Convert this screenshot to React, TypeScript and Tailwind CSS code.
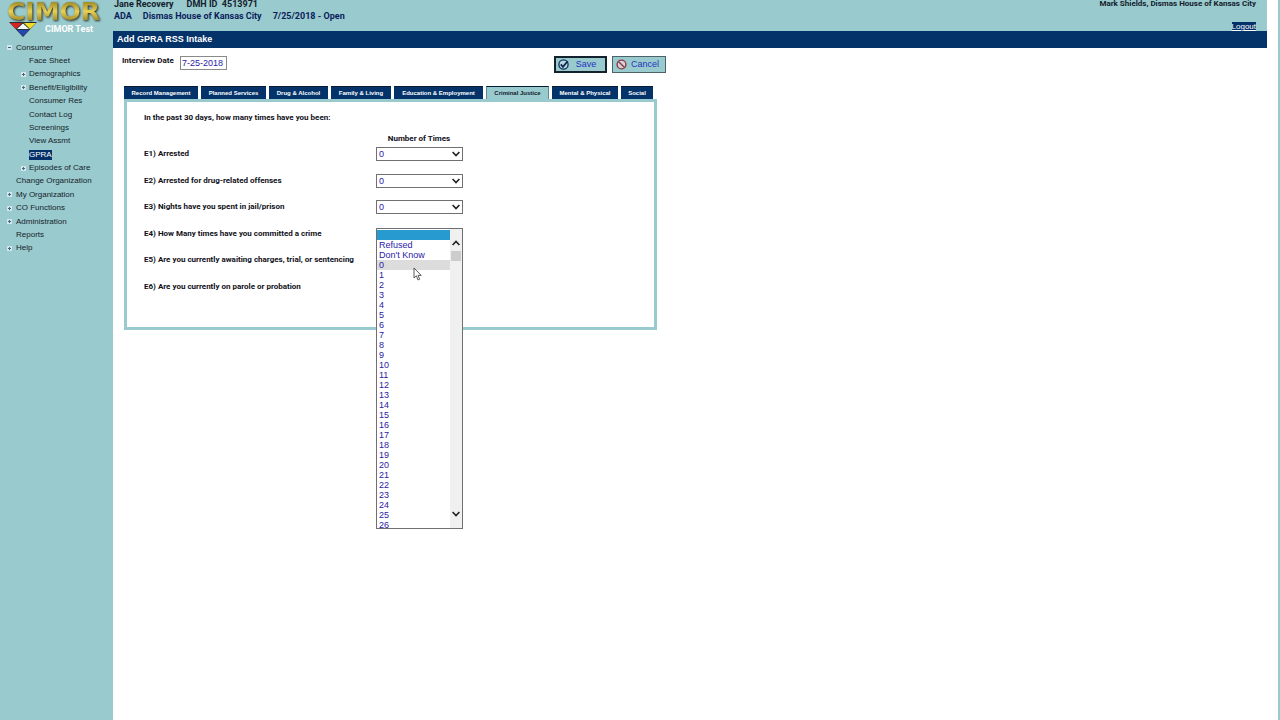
import { useState } from 'react';
import clsx from 'clsx';

interface NavItem {
  label: string;
  level: 0 | 1;
  toggle?: 'plus' | 'minus';
  active?: boolean;
}

const NAV: NavItem[] = [
  { label: 'Consumer', level: 0, toggle: 'minus' },
  { label: 'Face Sheet', level: 1 },
  { label: 'Demographics', level: 1, toggle: 'plus' },
  { label: 'Benefit/Eligibility', level: 1, toggle: 'plus' },
  { label: 'Consumer Res', level: 1 },
  { label: 'Contact Log', level: 1 },
  { label: 'Screenings', level: 1 },
  { label: 'View Assmt', level: 1 },
  { label: 'GPRA', level: 1, active: true },
  { label: 'Episodes of Care', level: 1, toggle: 'plus' },
  { label: 'Change Organization', level: 0 },
  { label: 'My Organization', level: 0, toggle: 'plus' },
  { label: 'CO Functions', level: 0, toggle: 'plus' },
  { label: 'Administration', level: 0, toggle: 'plus' },
  { label: 'Reports', level: 0 },
  { label: 'Help', level: 0, toggle: 'plus' },
];

const TABS = [
  { label: 'Record Management', width: 'w-[74px]' },
  { label: 'Planned Services', width: 'w-[65px]' },
  { label: 'Drug & Alcohol', width: 'w-[59px]' },
  { label: 'Family & Living', width: 'w-[60px]' },
  { label: 'Education & Employment', width: 'w-[89px]' },
  { label: 'Criminal Justice', width: 'w-[63px]' },
  { label: 'Mental & Physical', width: 'w-[66px]' },
  { label: 'Social', width: 'w-[32px]' },
];

const QUESTIONS = [
  { id: 'e1', label: 'E1) Arrested', value: '0' },
  { id: 'e2', label: 'E2) Arrested for drug-related offenses', value: '0' },
  { id: 'e3', label: 'E3) Nights have you spent in jail/prison', value: '0' },
  { id: 'e4', label: 'E4) How Many times have you committed a crime', open: true },
  { id: 'e5', label: 'E5) Are you currently awaiting charges, trial, or sentencing' },
  { id: 'e6', label: 'E6) Are you currently on parole or probation' },
];

const OPTIONS = ['', 'Refused', "Don't Know", ...Array.from({ length: 27 }, (_, i) => String(i))];

function Chevron({ up = false, className }: { up?: boolean; className?: string }) {
  return (
    <svg viewBox="0 0 8 6" className={clsx('h-[6px] w-2', className)} fill="none" stroke="#222" strokeWidth="1.6">
      <path d={up ? 'M0.6 5 4 1.4 7.4 5' : 'M0.6 1 4 4.6 7.4 1'} />
    </svg>
  );
}

function Toggle({ kind }: { kind: 'plus' | 'minus' }) {
  return (
    <svg viewBox="0 0 5 5" className="h-[5px] w-[5px]">
      <rect width="5" height="5" fill="#d3e6ec" />
      <path d={kind === 'plus' ? 'M1 2.5h3M2.5 1v3' : 'M1 2.5h3'} stroke="#4c6580" />
    </svg>
  );
}

function Logo() {
  return (
    <div className="h-[41px] pl-[7px]">
      <div className="h-[22px] font-['DejaVu_Sans'] text-[25px] leading-[24px] font-bold drop-shadow-[1px_1px_1px_#2b2a1c]">
        <span className="bg-linear-to-b from-[#7d6c10] via-[#e8d052] to-[#7a6510] bg-clip-text text-transparent">
          CIMOR
        </span>
      </div>
      <div className="flex items-center">
        <svg viewBox="0 0 28 15" className="ml-[2px] h-[15px] w-7">
          <path d="M0 0h28L14 15z" fill="#233" />
          <path d="M1 1h12L7 7z" fill="#d8231f" />
          <path d="M15 1h12l-6 6z" fill="#f0dc28" />
          <path d="M14 1.5 20 7H8z" fill="#f4f8f8" />
          <path d="M8 8h12l-6 6z" fill="#2447b5" />
        </svg>
        <span className="ml-[8px] font-[Roboto,sans-serif] text-[9px] leading-[15px] font-bold text-white">
          CIMOR Test
        </span>
      </div>
    </div>
  );
}

function Sidebar() {
  return (
    <aside className="w-[113px] shrink-0 bg-[#99cacd]">
      <Logo />
      <nav>
        <ul className="grid h-[214px] grid-rows-16">
          {NAV.map((item) => (
            <li key={item.label} className={clsx('flex items-center', item.level ? 'pl-[21px]' : 'pl-[7px]')}>
              <span className={item.level ? 'w-2' : 'w-[9px]'}>{item.toggle && <Toggle kind={item.toggle} />}</span>
              <a
                href="#"
                className={clsx(
                  'text-[8px] leading-[10px] whitespace-nowrap',
                  item.active ? 'bg-[#04306a] text-white' : 'text-[#16222c]',
                )}
              >
                {item.label}
              </a>
            </li>
          ))}
        </ul>
      </nav>
    </aside>
  );
}

function Header() {
  return (
    <header className="flex h-[31px] justify-between bg-[#99cacd] pr-[11px] pl-px font-bold">
      <div className="font-[Roboto,sans-serif] text-[9px] leading-[12px] text-[#0b1d5c]">
        <div className="-mt-[2px] flex gap-[13px] text-[#14202c]">
          <span>Jane Recovery</span>
          <span>DMH ID&nbsp; 4513971</span>
        </div>
        <div className="flex gap-[11px]">
          <span>ADA</span>
          <span>Dismas House of Kansas City</span>
          <span>7/25/2018 - Open</span>
        </div>
      </div>
      <div className="flex flex-col items-end justify-between text-[8px] leading-[9px]">
        <span className="-mt-px font-[Roboto,sans-serif] text-[#14202c]">Mark Shields, Dismas House of Kansas City</span>
        <a href="#" className="bg-[#04306a] text-[8px] font-normal text-white underline">
          Logout
        </a>
      </div>
    </header>
  );
}

function OpenList() {
  return (
    <div className="absolute top-px left-0 z-10 flex h-[301px] w-[87px] border border-[#707070] bg-white">
      <ul
        role="listbox"
        aria-label="Number of times committed a crime"
        className="flex-1 overflow-hidden pt-px"
      >
        {OPTIONS.map((option) => (
          <li
            key={option}
            role="option"
            aria-selected={option === ''}
            className={clsx(
              'h-[10px] pl-[2px] text-[9px] leading-[10px] text-[#2a20a8]',
              option === '' && 'bg-[#279bd0]',
              option === '0' && 'bg-[#dcdcdc]',
            )}
          >
            {option}
          </li>
        ))}
      </ul>
      <div className="flex w-3 flex-col items-center bg-[#f0f0f0] pt-[11px] pb-[11px]">
        <Chevron up />
        <div className="mt-[5px] h-[10px] w-[10px] bg-[#cdcdcd]" />
        <Chevron className="mt-auto" />
      </div>
      <svg viewBox="0 0 9 14" className="absolute top-[38px] left-[36px] h-[14px] w-[9px]">
        <path d="M1 1v10l2.4-2.2L5 13l1.7-.8L5 8.4h3.2z" fill="#fff" stroke="#333" strokeWidth=".8" />
      </svg>
    </div>
  );
}

function TimesSelect({ id, value }: { id: string; value: string }) {
  const [current, setCurrent] = useState(value);
  return (
    <div className="relative">
      <select
        id={id}
        value={current}
        onChange={(e) => setCurrent(e.target.value)}
        className="block h-[14px] w-[87px] appearance-none border border-[#707070] bg-white pl-[2px] text-[9px] leading-[12px] text-[#2a20a8]"
      >
        {OPTIONS.map((option) => (
          <option key={option}>{option}</option>
        ))}
      </select>
      <Chevron className="pointer-events-none absolute top-1 right-[3px]" />
    </div>
  );
}

function CriminalJusticePanel() {
  return (
    <section className="h-[231px] w-[533px] border-[3px] border-[#99cacd] bg-white pt-[10px] pl-[17px] font-[Roboto,sans-serif] text-[8px] font-bold text-[#101018]">
      <p className="leading-[12px]">In the past 30 days, how many times have you been:</p>
      <p className="mt-[9px] ml-[232px] w-[86px] text-center leading-[12px]">Number of Times</p>
      <div className="mt-[-4px] grid h-[159px] grid-rows-6">
        {QUESTIONS.map((q) => (
          <div key={q.id} className="grid grid-cols-[232px_87px] items-center">
            <label htmlFor={q.id} className="leading-[12px] whitespace-nowrap">
              {q.label}
            </label>
            <div className="font-['Liberation_Sans',Arial,sans-serif] font-normal">
              {q.value && <TimesSelect id={q.id} value={q.value} />}
              {q.open && (
                <div className="relative">
                  <div className="-mt-[7px]">
                    <OpenList />
                  </div>
                </div>
              )}
            </div>
          </div>
        ))}
      </div>
    </section>
  );
}

function Toolbar() {
  return (
    <div className="flex w-[553px] items-start pt-2 pl-[9px]">
      <label
        htmlFor="interview-date"
        className="w-[58px] font-[Roboto,sans-serif] text-[8px] leading-[10px] font-bold text-[#101018]"
      >
        Interview Date
      </label>
      <input
        id="interview-date"
        defaultValue="7-25-2018"
        className="h-[14px] w-[47px] border border-[#8a8a8a] bg-white pl-px text-[9px] text-[#2a20a8]"
      />
      <div className="ml-auto flex gap-[5px] text-[9px] text-[#1f35c0]">
        <button type="button" className="flex h-[17px] w-[53px] items-center border-2 border-[#14222e] bg-[#99cacd] pl-[2px]">
          <svg viewBox="0 0 11 11" className="h-[11px] w-[11px]">
            <circle cx="5.5" cy="5.5" r="4.6" fill="#b9d6e4" stroke="#12305c" strokeWidth="1.3" />
            <path d="M2.8 5.4 5 7.8 9.6 2.2" fill="none" stroke="#12284c" strokeWidth="1.8" />
          </svg>
          <span className="flex-1 pr-[2px]">Save</span>
        </button>
        <button type="button" className="flex h-[17px] w-[54px] items-center border border-[#4b6268] bg-[#99cacd] pl-[3px]">
          <svg viewBox="0 0 11 11" className="h-[11px] w-[11px]">
            <circle cx="5.5" cy="5.5" r="4.4" fill="#d5d3da" stroke="#8c3b48" strokeWidth="1.4" />
            <path d="M2.4 2.4 8.6 8.6" stroke="#8c3b48" strokeWidth="1.4" />
          </svg>
          <span className="flex-1 pr-[2px]">Cancel</span>
        </button>
      </div>
    </div>
  );
}

function TabBar() {
  const [active, setActive] = useState('Criminal Justice');
  return (
    <div role="tablist" className="flex gap-[3px]">
      {TABS.map((tab) => (
        <button
          key={tab.label}
          type="button"
          role="tab"
          aria-selected={tab.label === active}
          onClick={() => setActive(tab.label)}
          className={clsx(
            'h-[13px] shrink-0 border-t border-[#0a1a33] text-center text-[6px] leading-[12px] font-bold whitespace-nowrap',
            tab.width,
            tab.label === active ? 'border-x border-x-[#5d8a90] bg-[#99cacd] text-[#14202c]' : 'bg-[#04336a] text-white',
          )}
        >
          {tab.label}
        </button>
      ))}
    </div>
  );
}

export default function App() {
  return (
    <div className="flex min-h-screen overflow-hidden border-r-2 border-[#99cacd] bg-white font-['Liberation_Sans',Arial,sans-serif]">
      <Sidebar />
      <main className="mr-[11px] min-w-0 flex-1">
        <Header />
        <h1 className="h-[17px] bg-[#04336a] pl-[4px] text-[9px] leading-[17px] font-bold text-white">
          Add GPRA RSS Intake
        </h1>
        <Toolbar />
        <div className="mt-[13px] ml-[11px]">
          <TabBar />
          <CriminalJusticePanel />
        </div>
      </main>
    </div>
  );
}
